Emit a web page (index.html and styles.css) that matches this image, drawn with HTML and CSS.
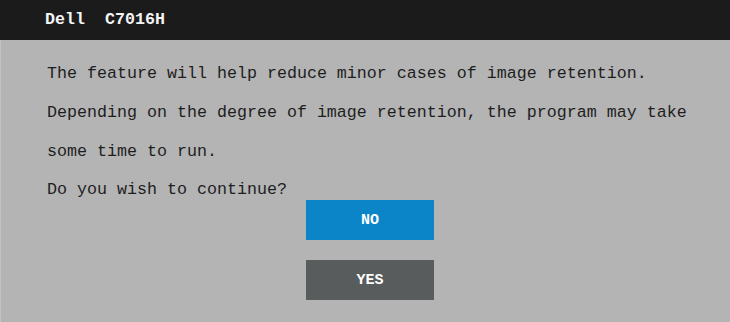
FILE: index.html
```html
<!doctype html>
<html lang="en">
<head>
	<meta charset="UTF-8">
	<title>Dell C7016H</title>
	<link rel="stylesheet" href="styles.css">
</head>
<body>
	<div class="osd">
		<div class="title">Dell  C7016H</div>
		<div class="content">
			<p class="msg">The feature will help reduce minor cases of image retention.</p>
			<p class="msg">Depending on the degree of image retention, the program may take</p>
			<p class="msg">some time to run.</p>
			<p class="ask">Do you wish to continue?</p>
			<div class="btns">
				<a href="javascript:;" class="btn no">NO</a>
				<a href="javascript:;" class="btn yes">YES</a>
			</div>
		</div>
	</div>
</body>
</html>
```

FILE: styles.css
```css
html,body{margin: 0;padding: 0;}
body{
	background-color: #b4b4b4;
	font-family: "Liberation Mono", "Courier New", monospace;
}
p{margin: 0;}
.osd{
	display: flex;
	flex-direction: column;
	width: 730px;
	height: 322px;
	background-color: #b4b4b4;
}
.title{
	height: 40px;
	line-height: 40px;
	padding-left: 45px;
	background-color: #1b1b1b;
	color: #f4f4f4;
	font-size: 16.67px;
	font-weight: bold;
	white-space: pre;
}
.content{
	flex: 1;
	padding-top: 14px;
	padding-left: 46px;
	border-left: 1px solid #c2c2c2;
	color: #1e1e1e;
	font-size: 16.67px;
}
.msg{
	height: 39px;
	line-height: 39px;
}
.ask{
	margin-top: 9px;
	height: 20px;
	line-height: 20px;
}
.btns{
	display: flex;
	flex-direction: column;
	gap: 20px;
	padding-left: 259px;
}
.btn{
	display: flex;
	align-items: center;
	justify-content: center;
	width: 128px;
	height: 40px;
	color: #fff;
	font-size: 15px;
	font-weight: bold;
	text-decoration: none;
}
.no{background-color: #0b85c8;}
.yes{background-color: #585c5c;}
```
